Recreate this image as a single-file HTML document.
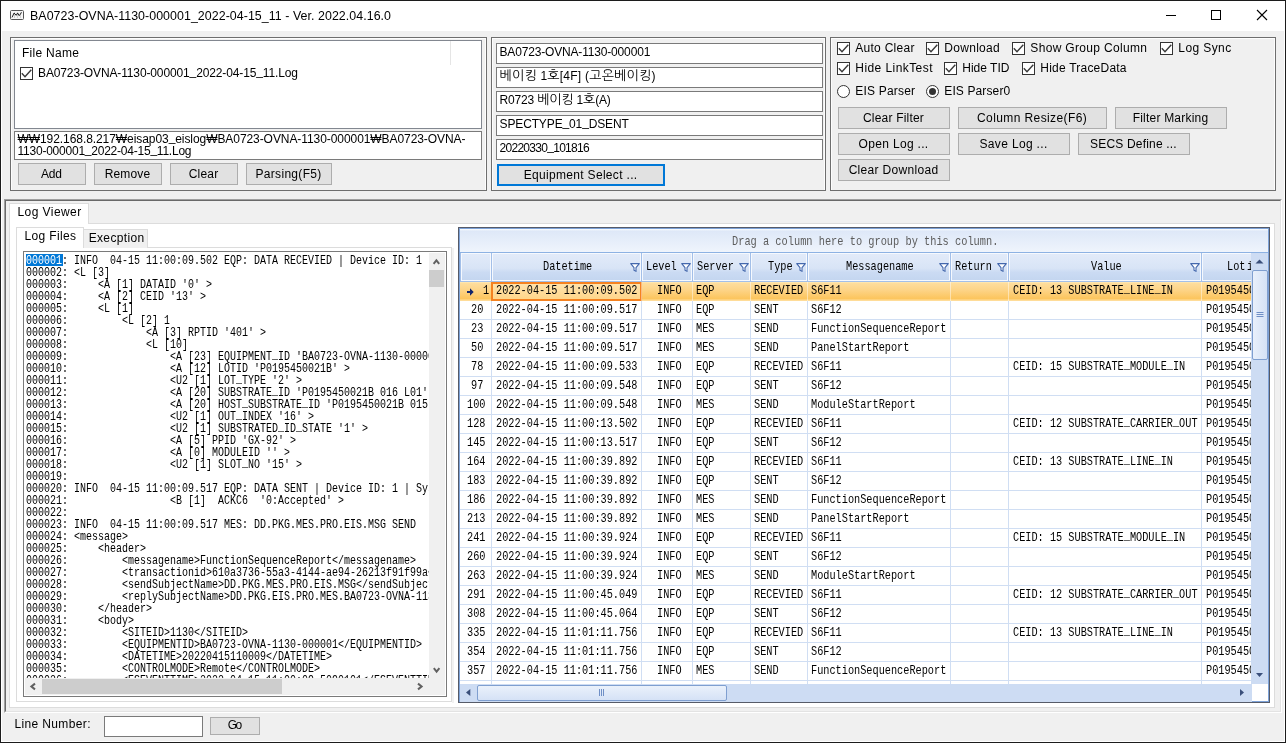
<!DOCTYPE html>
<html lang="ko"><head><meta charset="utf-8"><title>BA0723-OVNA-1130-000001_2022-04-15_11 - Ver. 2022.04.16.0</title>
<style>
*{box-sizing:border-box}
html,body{margin:0;padding:0;background:#f0f0f0;overflow:hidden}
#win{will-change:transform;position:relative;width:1286px;height:743px;background:#f0f0f0;overflow:hidden;font:12px "Liberation Sans","NanumGothic",sans-serif;color:#000}
#win div,#win span{position:absolute;white-space:pre}
#win span span{position:static}
#win span.u{position:relative;top:-2px}
.g{font:12px/14px "Liberation Sans","NanumGothic",sans-serif;color:#000}
.k{font-size:13px}
.btn{background:#e1e1e1;border:1px solid #adadad}
.tb{background:#fff;border:1px solid #7a7a7a}
.cb{width:13px;height:13px;background:#fff;border:1px solid #333}
.cb svg{position:absolute;left:0;top:0}
.rb{width:13px;height:13px;background:#fff;border:1px solid #333;border-radius:50%}
.grp{border:1px solid #6e6e6e;box-shadow:inset 1px 1px 0 #fdfdfd, inset -1px 0 0 #fdfdfd}
.m{height:12px;overflow:hidden;font:13.5px/12px "Liberation Mono","NanumGothic",monospace;transform:scaleX(0.7407);transform-origin:0 0;color:#000}
.dx{font:13px/12px "Liberation Mono","NanumGothic",monospace;transform:scaleX(0.7885);transform-origin:0 0;color:#000}
</style></head><body>
<div id="win">

<div style="left:0;top:0;width:1286px;height:31px;background:#fff"></div>
<svg style="position:absolute;left:10px;top:10px" width="14" height="10" viewBox="0 0 14 10"><rect x="0.5" y="0.5" width="13" height="9" rx="1" fill="#f6f6f6" stroke="#555"/><path d="M4.5 2V8M7.5 2V8M10.5 2V8" stroke="#d0d0d0" stroke-width="1"/><path d="M2 7.4L4.1 3L6.2 5.3L7.6 3L9.2 5.7L11.6 2.4" fill="none" stroke="#222" stroke-width="1"/></svg>
<span id="t1" class="g" style="left:30.00px;top:8px;letter-spacing:0.058px;font:12.4px/16px 'Liberation Sans',sans-serif">BA0723-OVNA-1130-000001_2022-04-15_11 - Ver. 2022.04.16.0</span>
<svg style="position:absolute;left:1160px;top:5px" width="115" height="22" viewBox="0 0 115 22"><path d="M6 10.5H16" stroke="#000" stroke-width="1"/><rect x="51.5" y="5.5" width="9" height="9" fill="none" stroke="#000" stroke-width="1"/><path d="M97 5L107 15M107 5L97 15" stroke="#000" stroke-width="1.1"/></svg>
<div class="grp" style="left:10px;top:37px;width:477px;height:154px"></div>
<div style="left:14px;top:40px;width:468px;height:89px;background:#fff;border:1px solid #828790"></div>
<div style="left:450px;top:41px;width:1px;height:24px;background:#e5e5e5"></div>
<span id="t2" class="g" style="left:22.00px;top:46px;letter-spacing:0.289px;">File Name</span>
<div class="cb" style="left:20px;top:67px"><svg width="11" height="11" viewBox="0 0 11 11"><path d="M0.8 5.3L4 8.8L10.3 1.8" fill="none" stroke="#3a3a3a" stroke-width="1.4"/></svg></div>
<span id="t3" class="g" style="left:38.00px;top:66px;letter-spacing:-0.128px;">BA0723-OVNA-1130-000001<span class="u">_</span>2022-04-15<span class="u">_</span>11.Log</span>
<div class="tb" style="left:14px;top:131px;width:468px;height:29px"></div>
<span id="t4" class="g" style="left:17.50px;top:132px;letter-spacing:-0.071px;">₩₩192.168.8.217₩eisap03<span class="u">_</span>eislog₩BA0723-OVNA-1130-000001₩BA0723-OVNA-</span>
<span id="t5" class="g" style="left:17.50px;top:144px;letter-spacing:-0.229px;">1130-000001<span class="u">_</span>2022-04-15<span class="u">_</span>11.Log</span>
<div class="btn" style="left:18px;top:163px;width:68px;height:22px;"></div>
<span id="t6" class="g" style="left:40.90px;top:167px;letter-spacing:-0.180px;">Add</span>
<div class="btn" style="left:94px;top:163px;width:68px;height:22px;"></div>
<span id="t7" class="g" style="left:104.65px;top:167px;letter-spacing:0.163px;">Remove</span>
<div class="btn" style="left:170px;top:163px;width:68px;height:22px;"></div>
<span id="t8" class="g" style="left:188.65px;top:167px;letter-spacing:0.203px;">Clear</span>
<div class="btn" style="left:246px;top:163px;width:86px;height:22px;"></div>
<span id="t9" class="g" style="left:255.55px;top:167px;letter-spacing:0.301px;">Parsing(F5)</span>
<div class="grp" style="left:491px;top:37px;width:335px;height:154px"></div>
<div class="tb" style="left:496px;top:43px;width:327px;height:21px"></div>
<span id="t10" class="g" style="left:499.50px;top:45px;letter-spacing:-0.170px;">BA0723-OVNA-1130-000001</span>
<div class="tb" style="left:496px;top:67px;width:327px;height:21px"></div>
<span id="t11" class="g" style="left:499.50px;top:69px;letter-spacing:0.233px;"><span class="k">베이킹</span> 1<span class="k">호</span>[4F] (<span class="k">고온베이킹</span>)</span>
<div class="tb" style="left:496px;top:91px;width:327px;height:21px"></div>
<span id="t12" class="g" style="left:499.50px;top:93px;letter-spacing:-0.166px;">R0723 <span class="k">베이킹</span> 1<span class="k">호</span>(A)</span>
<div class="tb" style="left:496px;top:115px;width:327px;height:21px"></div>
<span id="t13" class="g" style="left:499.50px;top:117px;letter-spacing:-0.127px;">SPECTYPE<span class="u">_</span>01<span class="u">_</span>DSENT</span>
<div class="tb" style="left:496px;top:139px;width:327px;height:21px"></div>
<span id="t14" class="g" style="left:499.50px;top:141px;letter-spacing:-0.709px;">20220330<span class="u">_</span>101816</span>
<div class="btn" style="left:497px;top:164px;width:168px;height:22px;border:2px solid #0078d7"></div>
<span id="t15" class="g" style="left:523.65px;top:168px;letter-spacing:0.322px;">Equipment Select ...</span>
<div class="grp" style="left:830px;top:37px;width:446px;height:154px"></div>
<div class="cb" style="left:837px;top:42px"><svg width="11" height="11" viewBox="0 0 11 11"><path d="M0.8 5.3L4 8.8L10.3 1.8" fill="none" stroke="#3a3a3a" stroke-width="1.4"/></svg></div>
<span id="t16" class="g" style="left:855.30px;top:41px;letter-spacing:0.266px;">Auto Clear</span>
<div class="cb" style="left:926px;top:42px"><svg width="11" height="11" viewBox="0 0 11 11"><path d="M0.8 5.3L4 8.8L10.3 1.8" fill="none" stroke="#3a3a3a" stroke-width="1.4"/></svg></div>
<span id="t17" class="g" style="left:944.30px;top:41px;letter-spacing:0.289px;">Download</span>
<div class="cb" style="left:1012px;top:42px"><svg width="11" height="11" viewBox="0 0 11 11"><path d="M0.8 5.3L4 8.8L10.3 1.8" fill="none" stroke="#3a3a3a" stroke-width="1.4"/></svg></div>
<span id="t18" class="g" style="left:1030.30px;top:41px;letter-spacing:0.332px;">Show Group Column</span>
<div class="cb" style="left:1160px;top:42px"><svg width="11" height="11" viewBox="0 0 11 11"><path d="M0.8 5.3L4 8.8L10.3 1.8" fill="none" stroke="#3a3a3a" stroke-width="1.4"/></svg></div>
<span id="t19" class="g" style="left:1178.30px;top:41px;letter-spacing:0.408px;">Log Sync</span>
<div class="cb" style="left:837px;top:62px"><svg width="11" height="11" viewBox="0 0 11 11"><path d="M0.8 5.3L4 8.8L10.3 1.8" fill="none" stroke="#3a3a3a" stroke-width="1.4"/></svg></div>
<span id="t20" class="g" style="left:855.30px;top:61px;letter-spacing:0.429px;">Hide LinkTest</span>
<div class="cb" style="left:944px;top:62px"><svg width="11" height="11" viewBox="0 0 11 11"><path d="M0.8 5.3L4 8.8L10.3 1.8" fill="none" stroke="#3a3a3a" stroke-width="1.4"/></svg></div>
<span id="t21" class="g" style="left:962.30px;top:61px;letter-spacing:-0.006px;">Hide TID</span>
<div class="cb" style="left:1022px;top:62px"><svg width="11" height="11" viewBox="0 0 11 11"><path d="M0.8 5.3L4 8.8L10.3 1.8" fill="none" stroke="#3a3a3a" stroke-width="1.4"/></svg></div>
<span id="t22" class="g" style="left:1040.30px;top:61px;letter-spacing:0.217px;">Hide TraceData</span>
<div class="rb" style="left:837px;top:85px"></div>
<span id="t23" class="g" style="left:855.30px;top:84px;letter-spacing:0.197px;">EIS Parser</span>
<div class="rb" style="left:926px;top:85px"><div style="left:2px;top:2px;width:7px;height:7px;border-radius:50%;background:#333"></div></div>
<span id="t24" class="g" style="left:944.30px;top:84px;letter-spacing:0.120px;">EIS Parser0</span>
<div class="btn" style="left:838px;top:107px;width:112px;height:22px;"></div>
<span id="t25" class="g" style="left:862.95px;top:111px;letter-spacing:0.201px;">Clear Filter</span>
<div class="btn" style="left:958px;top:107px;width:149px;height:22px;"></div>
<span id="t26" class="g" style="left:977.00px;top:111px;letter-spacing:0.403px;">Column Resize(F6)</span>
<div class="btn" style="left:1115px;top:107px;width:112px;height:22px;"></div>
<span id="t27" class="g" style="left:1132.70px;top:111px;letter-spacing:0.209px;">Filter Marking</span>
<div class="btn" style="left:838px;top:133px;width:112px;height:22px;"></div>
<span id="t28" class="g" style="left:858.60px;top:137px;letter-spacing:0.323px;">Open Log ...</span>
<div class="btn" style="left:958px;top:133px;width:112px;height:22px;"></div>
<span id="t29" class="g" style="left:979.50px;top:137px;letter-spacing:0.341px;">Save Log ...</span>
<div class="btn" style="left:1078px;top:133px;width:112px;height:22px;"></div>
<span id="t30" class="g" style="left:1090.10px;top:137px;letter-spacing:0.182px;">SECS Define ...</span>
<div class="btn" style="left:838px;top:159px;width:112px;height:22px;"></div>
<span id="t31" class="g" style="left:848.65px;top:163px;letter-spacing:0.316px;">Clear Download</span>
<div style="left:4px;top:199px;width:1278px;height:514px;border:1px solid #a0a0a0;border-right-color:#fff;border-bottom-color:#fff"></div>
<div style="left:5px;top:200px;width:1276px;height:512px;border:1px solid #696969;border-right-color:#e3e3e3;border-bottom-color:#e3e3e3"></div>
<div style="left:9px;top:223px;width:1266px;height:485px;background:#fff;border:1px solid #dcdcdc"></div>
<div style="left:9px;top:203px;width:80px;height:21px;background:#fff;border:1px solid #dcdcdc;border-bottom:none"></div>
<span id="t32" class="g" style="left:17.50px;top:205px;letter-spacing:0.430px;">Log Viewer</span>
<div style="left:16px;top:247px;width:436px;height:455px;background:#fff;border:1px solid #dcdcdc"></div>
<div style="left:452px;top:248px;width:2px;height:455px;background:#f2f2f2"></div>
<div style="left:83px;top:229px;width:65px;height:19px;background:#f0f0f0;border:1px solid #dcdcdc;border-bottom:none"></div>
<div style="left:16px;top:227px;width:68px;height:21px;background:#fff;border:1px solid #dcdcdc;border-bottom:none"></div>
<span id="t33" class="g" style="left:24.50px;top:229px;letter-spacing:0.350px;">Log Files</span>
<span id="t34" class="g" style="left:88.70px;top:231px;letter-spacing:0.337px;">Execption</span>
<div style="left:23px;top:251px;width:424px;height:446px;background:#fff;border:1px solid #7a7a7a"></div>
<div style="left:25px;top:253px;width:404px;height:425px;overflow:hidden" id="logclip">
<div style="left:1px;top:1px;width:37px;height:12px;background:#0078d7"></div>
<div class="m" style="left:1px;top:2px"><span style="position:static;color:#fff">000001</span>: INFO  04-15 11:00:09.502 EQP: DATA RECEVIED | Device ID: 1 | System Bytes: 20482</div>
<div class="m" style="left:1px;top:14px">000002: &lt;L [3]</div>
<div class="m" style="left:1px;top:26px">000003:     &lt;A [1] DATAID '0' &gt;</div>
<div class="m" style="left:1px;top:38px">000004:     &lt;A [2] CEID '13' &gt;</div>
<div class="m" style="left:1px;top:50px">000005:     &lt;L [1]</div>
<div class="m" style="left:1px;top:62px">000006:         &lt;L [2] 1</div>
<div class="m" style="left:1px;top:74px">000007:             &lt;A [3] RPTID '401' &gt;</div>
<div class="m" style="left:1px;top:86px">000008:             &lt;L [10]</div>
<div class="m" style="left:1px;top:98px">000009:                 &lt;A [23] EQUIPMENT<span class="u">_</span>ID 'BA0723-OVNA-1130-000001' &gt;</div>
<div class="m" style="left:1px;top:110px">000010:                 &lt;A [12] LOTID 'P0195450021B' &gt;</div>
<div class="m" style="left:1px;top:122px">000011:                 &lt;U2 [1] LOT<span class="u">_</span>TYPE '2' &gt;</div>
<div class="m" style="left:1px;top:134px">000012:                 &lt;A [20] SUBSTRATE<span class="u">_</span>ID 'P0195450021B 016 L01' &gt;</div>
<div class="m" style="left:1px;top:146px">000013:                 &lt;A [20] HOST<span class="u">_</span>SUBSTRATE<span class="u">_</span>ID 'P0195450021B 015 L01' &gt;</div>
<div class="m" style="left:1px;top:158px">000014:                 &lt;U2 [1] OUT<span class="u">_</span>INDEX '16' &gt;</div>
<div class="m" style="left:1px;top:170px">000015:                 &lt;U2 [1] SUBSTRATED<span class="u">_</span>ID<span class="u">_</span>STATE '1' &gt;</div>
<div class="m" style="left:1px;top:182px">000016:                 &lt;A [5] PPID 'GX-92' &gt;</div>
<div class="m" style="left:1px;top:194px">000017:                 &lt;A [0] MODULEID '' &gt;</div>
<div class="m" style="left:1px;top:206px">000018:                 &lt;U2 [1] SLOT<span class="u">_</span>NO '15' &gt;</div>
<div class="m" style="left:1px;top:218px">000019:</div>
<div class="m" style="left:1px;top:230px">000020: INFO  04-15 11:00:09.517 EQP: DATA SENT | Device ID: 1 | System Bytes: 20482</div>
<div class="m" style="left:1px;top:242px">000021:                 &lt;B [1]  ACKC6  '0:Accepted' &gt;</div>
<div class="m" style="left:1px;top:254px">000022:</div>
<div class="m" style="left:1px;top:266px">000023: INFO  04-15 11:00:09.517 MES: DD.PKG.MES.PRO.EIS.MSG SEND</div>
<div class="m" style="left:1px;top:278px">000024: &lt;message&gt;</div>
<div class="m" style="left:1px;top:290px">000025:     &lt;header&gt;</div>
<div class="m" style="left:1px;top:302px">000026:         &lt;messagename&gt;FunctionSequenceReport&lt;/messagename&gt;</div>
<div class="m" style="left:1px;top:314px">000027:         &lt;transactionid&gt;610a3736-55a3-4144-ae94-26213f91f99a&lt;/transactionid&gt;</div>
<div class="m" style="left:1px;top:326px">000028:         &lt;sendSubjectName&gt;DD.PKG.MES.PRO.EIS.MSG&lt;/sendSubjectName&gt;</div>
<div class="m" style="left:1px;top:338px">000029:         &lt;replySubjectName&gt;DD.PKG.EIS.PRO.MES.BA0723-OVNA-1130-000001&lt;/replySubjectName&gt;</div>
<div class="m" style="left:1px;top:350px">000030:     &lt;/header&gt;</div>
<div class="m" style="left:1px;top:362px">000031:     &lt;body&gt;</div>
<div class="m" style="left:1px;top:374px">000032:         &lt;SITEID&gt;1130&lt;/SITEID&gt;</div>
<div class="m" style="left:1px;top:386px">000033:         &lt;EQUIPMENTID&gt;BA0723-OVNA-1130-000001&lt;/EQUIPMENTID&gt;</div>
<div class="m" style="left:1px;top:398px">000034:         &lt;DATETIME&gt;20220415110009&lt;/DATETIME&gt;</div>
<div class="m" style="left:1px;top:410px">000035:         &lt;CONTROLMODE&gt;Remote&lt;/CONTROLMODE&gt;</div>
<div class="m" style="left:1px;top:422px">000036:         &lt;ESEVENTTIME&gt;2022-04-15 11:00:09.5090101&lt;/ESEVENTTIME&gt;</div>
</div>
<div style="left:429px;top:253px;width:16px;height:425px;background:#f0f0f0"></div>
<div style="left:429px;top:270px;width:15px;height:17px;background:#cdcdcd"></div>
<div style="left:25px;top:678px;width:420px;height:17px;background:#f0f0f0"></div>
<div style="left:42px;top:679px;width:240px;height:15px;background:#cdcdcd"></div>
<svg style="position:absolute;left:0;top:0" width="460" height="700" viewBox="0 0 460 700" fill="none" stroke="#606060" stroke-width="2"><path d="M433.6 263.8L436.4 260.4L439.2 263.8"/><path d="M433.8 668.2L436.6 671.6L439.4 668.2"/><path d="M35 683.6L31.4 686.5L35 689.4"/><path d="M418 683.6L421.6 686.5L418 689.4"/></svg>
<div style="left:458px;top:227px;width:812px;height:476px;background:#fff;border:1px solid #565b68"></div>
<div style="left:459px;top:228px;width:810px;height:474px;border:1px solid #7da2d8"></div>
<div style="left:460px;top:229px;width:808px;height:23px;background:linear-gradient(#fdfeff 0,#dee8f8 2px,#eff4fc)"></div>
<div style="left:460px;top:252px;width:808px;height:1px;background:#8db2e3"></div>
<div class="dx" style="left:731.5px;top:236px;color:#5c5c5c;transform:scaleX(0.794)">Drag a column here to group by this column.</div>
<div style="left:460px;top:253px;width:792px;height:29px;background:#a3bfe8"></div>
<div style="left:461px;top:253px;width:30px;height:28px;background:linear-gradient(#e2ebf9 0%,#d8e4f6 55%,#cbdbf3 70%,#c4d6f0 100%);border:1px solid #f6f9fe"></div>
<div style="left:492px;top:253px;width:149px;height:28px;background:linear-gradient(#e2ebf9 0%,#d8e4f6 55%,#cbdbf3 70%,#c4d6f0 100%);border:1px solid #f6f9fe"></div>
<div style="left:642px;top:253px;width:50px;height:28px;background:linear-gradient(#e2ebf9 0%,#d8e4f6 55%,#cbdbf3 70%,#c4d6f0 100%);border:1px solid #f6f9fe"></div>
<div style="left:693px;top:253px;width:57px;height:28px;background:linear-gradient(#e2ebf9 0%,#d8e4f6 55%,#cbdbf3 70%,#c4d6f0 100%);border:1px solid #f6f9fe"></div>
<div style="left:751px;top:253px;width:56px;height:28px;background:linear-gradient(#e2ebf9 0%,#d8e4f6 55%,#cbdbf3 70%,#c4d6f0 100%);border:1px solid #f6f9fe"></div>
<div style="left:808px;top:253px;width:142px;height:28px;background:linear-gradient(#e2ebf9 0%,#d8e4f6 55%,#cbdbf3 70%,#c4d6f0 100%);border:1px solid #f6f9fe"></div>
<div style="left:951px;top:253px;width:57px;height:28px;background:linear-gradient(#e2ebf9 0%,#d8e4f6 55%,#cbdbf3 70%,#c4d6f0 100%);border:1px solid #f6f9fe"></div>
<div style="left:1009px;top:253px;width:192px;height:28px;background:linear-gradient(#e2ebf9 0%,#d8e4f6 55%,#cbdbf3 70%,#c4d6f0 100%);border:1px solid #f6f9fe"></div>
<div style="left:1202px;top:253px;width:50px;height:28px;background:linear-gradient(#e2ebf9 0%,#d8e4f6 55%,#cbdbf3 70%,#c4d6f0 100%);border:1px solid #f6f9fe"></div>
<div class="dx" style="left:542.5px;top:261px">Datetime</div>
<div class="dx" style="left:645.5px;top:261px">Level</div>
<div class="dx" style="left:696.5px;top:261px">Server</div>
<div class="dx" style="left:768px;top:261px">Type</div>
<div class="dx" style="left:845.5px;top:261px">Messagename</div>
<div class="dx" style="left:954.7px;top:261px">Return</div>
<div class="dx" style="left:1090.7px;top:261px">Value</div>
<div class="dx" style="left:1227px;top:261px">Lot</div>
<div class="dx" style="left:1246.5px;top:261px">i</div>
<svg style="position:absolute;left:630px;top:263px" width="10" height="9" viewBox="0 0 10 9"><path d="M0.7 0.6H9.3L6 4.6V8.4L4 7.2V4.6Z" fill="#fff" stroke="#4468ad" stroke-width="1.1" stroke-linejoin="round"/></svg>
<svg style="position:absolute;left:681px;top:263px" width="10" height="9" viewBox="0 0 10 9"><path d="M0.7 0.6H9.3L6 4.6V8.4L4 7.2V4.6Z" fill="#fff" stroke="#4468ad" stroke-width="1.1" stroke-linejoin="round"/></svg>
<svg style="position:absolute;left:739px;top:263px" width="10" height="9" viewBox="0 0 10 9"><path d="M0.7 0.6H9.3L6 4.6V8.4L4 7.2V4.6Z" fill="#fff" stroke="#4468ad" stroke-width="1.1" stroke-linejoin="round"/></svg>
<svg style="position:absolute;left:796px;top:263px" width="10" height="9" viewBox="0 0 10 9"><path d="M0.7 0.6H9.3L6 4.6V8.4L4 7.2V4.6Z" fill="#fff" stroke="#4468ad" stroke-width="1.1" stroke-linejoin="round"/></svg>
<svg style="position:absolute;left:939px;top:263px" width="10" height="9" viewBox="0 0 10 9"><path d="M0.7 0.6H9.3L6 4.6V8.4L4 7.2V4.6Z" fill="#fff" stroke="#4468ad" stroke-width="1.1" stroke-linejoin="round"/></svg>
<svg style="position:absolute;left:997px;top:263px" width="10" height="9" viewBox="0 0 10 9"><path d="M0.7 0.6H9.3L6 4.6V8.4L4 7.2V4.6Z" fill="#fff" stroke="#4468ad" stroke-width="1.1" stroke-linejoin="round"/></svg>
<svg style="position:absolute;left:1189.5px;top:263px" width="10" height="9" viewBox="0 0 10 9"><path d="M0.7 0.6H9.3L6 4.6V8.4L4 7.2V4.6Z" fill="#fff" stroke="#4468ad" stroke-width="1.1" stroke-linejoin="round"/></svg>
<div id="rows" style="left:460px;top:282px;width:791px;height:402px;overflow:hidden;background:#fff">
<div style="left:31px;top:0;width:1px;height:402px;background:#d0def3"></div>
<div style="left:181px;top:0;width:1px;height:402px;background:#d0def3"></div>
<div style="left:232px;top:0;width:1px;height:402px;background:#d0def3"></div>
<div style="left:290px;top:0;width:1px;height:402px;background:#d0def3"></div>
<div style="left:347px;top:0;width:1px;height:402px;background:#d0def3"></div>
<div style="left:490px;top:0;width:1px;height:402px;background:#d0def3"></div>
<div style="left:548px;top:0;width:1px;height:402px;background:#d0def3"></div>
<div style="left:741px;top:0;width:1px;height:402px;background:#d0def3"></div>
<div style="left:0;top:18px;width:792px;height:1px;background:#d0def3"></div>
<div style="left:0;top:37px;width:792px;height:1px;background:#d0def3"></div>
<div style="left:0;top:56px;width:792px;height:1px;background:#d0def3"></div>
<div style="left:0;top:75px;width:792px;height:1px;background:#d0def3"></div>
<div style="left:0;top:94px;width:792px;height:1px;background:#d0def3"></div>
<div style="left:0;top:113px;width:792px;height:1px;background:#d0def3"></div>
<div style="left:0;top:132px;width:792px;height:1px;background:#d0def3"></div>
<div style="left:0;top:151px;width:792px;height:1px;background:#d0def3"></div>
<div style="left:0;top:170px;width:792px;height:1px;background:#d0def3"></div>
<div style="left:0;top:189px;width:792px;height:1px;background:#d0def3"></div>
<div style="left:0;top:208px;width:792px;height:1px;background:#d0def3"></div>
<div style="left:0;top:227px;width:792px;height:1px;background:#d0def3"></div>
<div style="left:0;top:246px;width:792px;height:1px;background:#d0def3"></div>
<div style="left:0;top:265px;width:792px;height:1px;background:#d0def3"></div>
<div style="left:0;top:284px;width:792px;height:1px;background:#d0def3"></div>
<div style="left:0;top:303px;width:792px;height:1px;background:#d0def3"></div>
<div style="left:0;top:322px;width:792px;height:1px;background:#d0def3"></div>
<div style="left:0;top:341px;width:792px;height:1px;background:#d0def3"></div>
<div style="left:0;top:360px;width:792px;height:1px;background:#d0def3"></div>
<div style="left:0;top:379px;width:792px;height:1px;background:#d0def3"></div>
<div style="left:0;top:398px;width:792px;height:1px;background:#d0def3"></div>
<div style="left:0;top:417px;width:792px;height:1px;background:#d0def3"></div>
<div style="left:0;top:0;width:792px;height:19px;background:linear-gradient(#ffe9b6,#fedd9c 8%,#fdd385 45%,#fcc55d 88%,#ffdc98 96%)"></div>
<div style="left:31px;top:0px;width:151px;height:19px;border:2px solid #f58220;background:linear-gradient(#ffe3ac,#ffd68b)"></div>
<div style="left:181px;top:0;width:1px;height:19px;background:rgba(255,255,255,.45)"></div>
<div style="left:232px;top:0;width:1px;height:19px;background:rgba(255,255,255,.45)"></div>
<div style="left:290px;top:0;width:1px;height:19px;background:rgba(255,255,255,.45)"></div>
<div style="left:347px;top:0;width:1px;height:19px;background:rgba(255,255,255,.45)"></div>
<div style="left:490px;top:0;width:1px;height:19px;background:rgba(255,255,255,.45)"></div>
<div style="left:548px;top:0;width:1px;height:19px;background:rgba(255,255,255,.45)"></div>
<div style="left:741px;top:0;width:1px;height:19px;background:rgba(255,255,255,.45)"></div>
<svg style="position:absolute;left:7px;top:6px" width="7" height="8" viewBox="0 0 7 8"><path d="M0 3H3V0.3L6.7 4L3 7.7V5H0Z" fill="#10246b"/></svg>
<div class="dx" style="left:23.3px;top:3px">1</div>
<div class="dx" style="left:35.5px;top:3px">2022-04-15 11:00:09.502</div>
<div class="dx" style="left:197px;top:3px">INFO</div>
<div class="dx" style="left:236.3px;top:3px">EQP</div>
<div class="dx" style="left:294.2px;top:3px">RECEVIED</div>
<div class="dx" style="left:351.3px;top:3px">S6F11</div>
<div class="dx" style="left:552.6px;top:3px">CEID: 13 SUBSTRATE<span class="u">_</span>LINE<span class="u">_</span>IN</div>
<div class="dx" style="left:745.6px;top:3px">P0195450021B</div>
<div class="dx" style="left:10.5px;top:22px">20</div>
<div class="dx" style="left:35.5px;top:22px">2022-04-15 11:00:09.517</div>
<div class="dx" style="left:197px;top:22px">INFO</div>
<div class="dx" style="left:236.3px;top:22px">EQP</div>
<div class="dx" style="left:294.2px;top:22px">SENT</div>
<div class="dx" style="left:351.3px;top:22px">S6F12</div>
<div class="dx" style="left:745.6px;top:22px">P0195450021B</div>
<div class="dx" style="left:10.5px;top:41px">23</div>
<div class="dx" style="left:35.5px;top:41px">2022-04-15 11:00:09.517</div>
<div class="dx" style="left:197px;top:41px">INFO</div>
<div class="dx" style="left:236.3px;top:41px">MES</div>
<div class="dx" style="left:294.2px;top:41px">SEND</div>
<div class="dx" style="left:351.3px;top:41px">FunctionSequenceReport</div>
<div class="dx" style="left:745.6px;top:41px">P0195450021B</div>
<div class="dx" style="left:10.5px;top:60px">50</div>
<div class="dx" style="left:35.5px;top:60px">2022-04-15 11:00:09.517</div>
<div class="dx" style="left:197px;top:60px">INFO</div>
<div class="dx" style="left:236.3px;top:60px">MES</div>
<div class="dx" style="left:294.2px;top:60px">SEND</div>
<div class="dx" style="left:351.3px;top:60px">PanelStartReport</div>
<div class="dx" style="left:745.6px;top:60px">P0195450021B</div>
<div class="dx" style="left:10.5px;top:79px">78</div>
<div class="dx" style="left:35.5px;top:79px">2022-04-15 11:00:09.533</div>
<div class="dx" style="left:197px;top:79px">INFO</div>
<div class="dx" style="left:236.3px;top:79px">EQP</div>
<div class="dx" style="left:294.2px;top:79px">RECEVIED</div>
<div class="dx" style="left:351.3px;top:79px">S6F11</div>
<div class="dx" style="left:552.6px;top:79px">CEID: 15 SUBSTRATE<span class="u">_</span>MODULE<span class="u">_</span>IN</div>
<div class="dx" style="left:745.6px;top:79px">P0195450021B</div>
<div class="dx" style="left:10.5px;top:98px">97</div>
<div class="dx" style="left:35.5px;top:98px">2022-04-15 11:00:09.548</div>
<div class="dx" style="left:197px;top:98px">INFO</div>
<div class="dx" style="left:236.3px;top:98px">EQP</div>
<div class="dx" style="left:294.2px;top:98px">SENT</div>
<div class="dx" style="left:351.3px;top:98px">S6F12</div>
<div class="dx" style="left:745.6px;top:98px">P0195450021B</div>
<div class="dx" style="left:7.4px;top:117px">100</div>
<div class="dx" style="left:35.5px;top:117px">2022-04-15 11:00:09.548</div>
<div class="dx" style="left:197px;top:117px">INFO</div>
<div class="dx" style="left:236.3px;top:117px">MES</div>
<div class="dx" style="left:294.2px;top:117px">SEND</div>
<div class="dx" style="left:351.3px;top:117px">ModuleStartReport</div>
<div class="dx" style="left:745.6px;top:117px">P0195450021B</div>
<div class="dx" style="left:7.4px;top:136px">128</div>
<div class="dx" style="left:35.5px;top:136px">2022-04-15 11:00:13.502</div>
<div class="dx" style="left:197px;top:136px">INFO</div>
<div class="dx" style="left:236.3px;top:136px">EQP</div>
<div class="dx" style="left:294.2px;top:136px">RECEVIED</div>
<div class="dx" style="left:351.3px;top:136px">S6F11</div>
<div class="dx" style="left:552.6px;top:136px">CEID: 12 SUBSTRATE<span class="u">_</span>CARRIER<span class="u">_</span>OUT</div>
<div class="dx" style="left:745.6px;top:136px">P0195450021B</div>
<div class="dx" style="left:7.4px;top:155px">145</div>
<div class="dx" style="left:35.5px;top:155px">2022-04-15 11:00:13.517</div>
<div class="dx" style="left:197px;top:155px">INFO</div>
<div class="dx" style="left:236.3px;top:155px">EQP</div>
<div class="dx" style="left:294.2px;top:155px">SENT</div>
<div class="dx" style="left:351.3px;top:155px">S6F12</div>
<div class="dx" style="left:745.6px;top:155px">P0195450021B</div>
<div class="dx" style="left:7.4px;top:174px">164</div>
<div class="dx" style="left:35.5px;top:174px">2022-04-15 11:00:39.892</div>
<div class="dx" style="left:197px;top:174px">INFO</div>
<div class="dx" style="left:236.3px;top:174px">EQP</div>
<div class="dx" style="left:294.2px;top:174px">RECEVIED</div>
<div class="dx" style="left:351.3px;top:174px">S6F11</div>
<div class="dx" style="left:552.6px;top:174px">CEID: 13 SUBSTRATE<span class="u">_</span>LINE<span class="u">_</span>IN</div>
<div class="dx" style="left:745.6px;top:174px">P0195450021B</div>
<div class="dx" style="left:7.4px;top:193px">183</div>
<div class="dx" style="left:35.5px;top:193px">2022-04-15 11:00:39.892</div>
<div class="dx" style="left:197px;top:193px">INFO</div>
<div class="dx" style="left:236.3px;top:193px">EQP</div>
<div class="dx" style="left:294.2px;top:193px">SENT</div>
<div class="dx" style="left:351.3px;top:193px">S6F12</div>
<div class="dx" style="left:745.6px;top:193px">P0195450021B</div>
<div class="dx" style="left:7.4px;top:212px">186</div>
<div class="dx" style="left:35.5px;top:212px">2022-04-15 11:00:39.892</div>
<div class="dx" style="left:197px;top:212px">INFO</div>
<div class="dx" style="left:236.3px;top:212px">MES</div>
<div class="dx" style="left:294.2px;top:212px">SEND</div>
<div class="dx" style="left:351.3px;top:212px">FunctionSequenceReport</div>
<div class="dx" style="left:745.6px;top:212px">P0195450021B</div>
<div class="dx" style="left:7.4px;top:231px">213</div>
<div class="dx" style="left:35.5px;top:231px">2022-04-15 11:00:39.892</div>
<div class="dx" style="left:197px;top:231px">INFO</div>
<div class="dx" style="left:236.3px;top:231px">MES</div>
<div class="dx" style="left:294.2px;top:231px">SEND</div>
<div class="dx" style="left:351.3px;top:231px">PanelStartReport</div>
<div class="dx" style="left:745.6px;top:231px">P0195450021B</div>
<div class="dx" style="left:7.4px;top:250px">241</div>
<div class="dx" style="left:35.5px;top:250px">2022-04-15 11:00:39.924</div>
<div class="dx" style="left:197px;top:250px">INFO</div>
<div class="dx" style="left:236.3px;top:250px">EQP</div>
<div class="dx" style="left:294.2px;top:250px">RECEVIED</div>
<div class="dx" style="left:351.3px;top:250px">S6F11</div>
<div class="dx" style="left:552.6px;top:250px">CEID: 15 SUBSTRATE<span class="u">_</span>MODULE<span class="u">_</span>IN</div>
<div class="dx" style="left:745.6px;top:250px">P0195450021B</div>
<div class="dx" style="left:7.4px;top:269px">260</div>
<div class="dx" style="left:35.5px;top:269px">2022-04-15 11:00:39.924</div>
<div class="dx" style="left:197px;top:269px">INFO</div>
<div class="dx" style="left:236.3px;top:269px">EQP</div>
<div class="dx" style="left:294.2px;top:269px">SENT</div>
<div class="dx" style="left:351.3px;top:269px">S6F12</div>
<div class="dx" style="left:745.6px;top:269px">P0195450021B</div>
<div class="dx" style="left:7.4px;top:288px">263</div>
<div class="dx" style="left:35.5px;top:288px">2022-04-15 11:00:39.924</div>
<div class="dx" style="left:197px;top:288px">INFO</div>
<div class="dx" style="left:236.3px;top:288px">MES</div>
<div class="dx" style="left:294.2px;top:288px">SEND</div>
<div class="dx" style="left:351.3px;top:288px">ModuleStartReport</div>
<div class="dx" style="left:745.6px;top:288px">P0195450021B</div>
<div class="dx" style="left:7.4px;top:307px">291</div>
<div class="dx" style="left:35.5px;top:307px">2022-04-15 11:00:45.049</div>
<div class="dx" style="left:197px;top:307px">INFO</div>
<div class="dx" style="left:236.3px;top:307px">EQP</div>
<div class="dx" style="left:294.2px;top:307px">RECEVIED</div>
<div class="dx" style="left:351.3px;top:307px">S6F11</div>
<div class="dx" style="left:552.6px;top:307px">CEID: 12 SUBSTRATE<span class="u">_</span>CARRIER<span class="u">_</span>OUT</div>
<div class="dx" style="left:745.6px;top:307px">P0195450021B</div>
<div class="dx" style="left:7.4px;top:326px">308</div>
<div class="dx" style="left:35.5px;top:326px">2022-04-15 11:00:45.064</div>
<div class="dx" style="left:197px;top:326px">INFO</div>
<div class="dx" style="left:236.3px;top:326px">EQP</div>
<div class="dx" style="left:294.2px;top:326px">SENT</div>
<div class="dx" style="left:351.3px;top:326px">S6F12</div>
<div class="dx" style="left:745.6px;top:326px">P0195450021B</div>
<div class="dx" style="left:7.4px;top:345px">335</div>
<div class="dx" style="left:35.5px;top:345px">2022-04-15 11:01:11.756</div>
<div class="dx" style="left:197px;top:345px">INFO</div>
<div class="dx" style="left:236.3px;top:345px">EQP</div>
<div class="dx" style="left:294.2px;top:345px">RECEVIED</div>
<div class="dx" style="left:351.3px;top:345px">S6F11</div>
<div class="dx" style="left:552.6px;top:345px">CEID: 13 SUBSTRATE<span class="u">_</span>LINE<span class="u">_</span>IN</div>
<div class="dx" style="left:745.6px;top:345px">P0195450021B</div>
<div class="dx" style="left:7.4px;top:364px">354</div>
<div class="dx" style="left:35.5px;top:364px">2022-04-15 11:01:11.756</div>
<div class="dx" style="left:197px;top:364px">INFO</div>
<div class="dx" style="left:236.3px;top:364px">EQP</div>
<div class="dx" style="left:294.2px;top:364px">SENT</div>
<div class="dx" style="left:351.3px;top:364px">S6F12</div>
<div class="dx" style="left:745.6px;top:364px">P0195450021B</div>
<div class="dx" style="left:7.4px;top:383px">357</div>
<div class="dx" style="left:35.5px;top:383px">2022-04-15 11:01:11.756</div>
<div class="dx" style="left:197px;top:383px">INFO</div>
<div class="dx" style="left:236.3px;top:383px">MES</div>
<div class="dx" style="left:294.2px;top:383px">SEND</div>
<div class="dx" style="left:351.3px;top:383px">FunctionSequenceReport</div>
<div class="dx" style="left:745.6px;top:383px">P0195450021B</div>
</div>
<div style="left:1251px;top:253px;width:17px;height:431px;background:#cddcf3"></div>
<div style="left:1252px;top:270px;width:16px;height:90px;background:linear-gradient(90deg,#e9f0fb,#d5e2f6);border:1px solid #7f9fd0;border-radius:2px"></div>
<svg style="position:absolute;left:1252px;top:253px" width="16" height="431" viewBox="0 0 16 431"><path d="M3.5 10.5H11.5L7.5 6.5Z" fill="#3a4f7a"/><path d="M4 420H11L7.5 424Z" fill="#3a4f7a"/><path d="M4.5 59.5H11.5M4.5 61.5H11.5M4.5 63.5H11.5" stroke="#6f8fc6" stroke-width="1"/></svg>
<div style="left:460px;top:684px;width:792px;height:18px;background:#cddcf3"></div>
<div style="left:477px;top:685px;width:250px;height:16px;background:linear-gradient(#eaf1fb,#d5e2f6);border:1px solid #7f9fd0;border-radius:2px"></div>
<svg style="position:absolute;left:460px;top:684px" width="792" height="18" viewBox="0 0 792 18"><path d="M10.3 5V12L6 8.5Z" fill="#3a4f7a"/><path d="M780 5V12L784 8.5Z" fill="#3a4f7a"/><path d="M139.5 5V12M141.5 5V12M143.5 5V12" stroke="#6f8fc6" stroke-width="1"/></svg>
<div style="left:1252px;top:684px;width:16px;height:17px;background:#fff"></div>
<span id="t35" class="g" style="left:14.50px;top:717px;letter-spacing:0.359px;">Line Number:</span>
<div class="tb" style="left:104px;top:716px;width:99px;height:21px"></div>
<div class="btn" style="left:210px;top:717px;width:50px;height:18px"></div>
<span id="t36" class="g" style="left:227.85px;top:718px;letter-spacing:-1.716px;">Go</span>
<div style="left:0;top:0;width:1286px;height:1px;background:#1c1c1c"></div>
<div style="left:0;top:0;width:1px;height:743px;background:#1c1c1c"></div>
<div style="left:1px;top:31px;width:1px;height:711px;background:#fff"></div>
<div style="left:1284px;top:31px;width:1px;height:711px;background:#fff"></div>
<div style="left:1px;top:741px;width:1284px;height:1px;background:#fff"></div>
<div style="left:1285px;top:0;width:1px;height:743px;background:#1c1c1c"></div>
<div style="left:0;top:742px;width:1286px;height:1px;background:#1c1c1c"></div>
</div></body></html>
